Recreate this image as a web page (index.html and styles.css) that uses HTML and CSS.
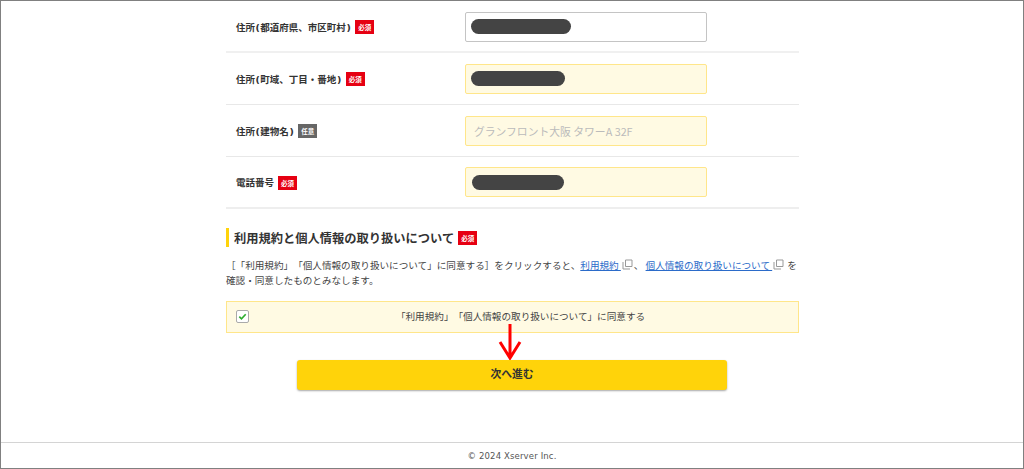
FILE: index.html
```html
<!DOCTYPE html>
<html lang="ja">
<head>
<meta charset="utf-8">
<title>Xserver</title>
<link rel="stylesheet" href="styles.css">
</head>
<body>
<div class="frame">
  <main class="content">
    <div class="row row-first">
      <div class="label"><span>住所<span class="paren">(</span>都道府県、市区町村<span class="paren">)</span></span><span class="tag">必須</span></div>
      <div class="field field-plain"><span class="mask mask-a"></span></div>
    </div>
    <div class="row">
      <div class="label"><span>住所<span class="paren">(</span>町域、丁目・番地<span class="paren">)</span></span><span class="tag">必須</span></div>
      <div class="field"><span class="mask mask-b"></span></div>
    </div>
    <div class="row">
      <div class="label"><span>住所<span class="paren">(</span>建物名<span class="paren">)</span></span><span class="tag tag-opt">任意</span></div>
      <div class="field placeholder">グランフロント大阪 タワーA 32F</div>
    </div>
    <div class="row row-last">
      <div class="label"><span>電話番号</span><span class="tag">必須</span></div>
      <div class="field"><span class="mask mask-c"></span></div>
    </div>

    <h2 class="title"><span>利用規約と個人情報の取り扱いについて</span><span class="tag">必須</span></h2>
    <p class="note">［「利用規約」「個人情報の取り扱いについて」に同意する］をクリックすると、<a href="#">利用規約 </a><svg class="ext" viewBox="0 0 11 11"><path d="M3.5 1h6.5v6.5h-6.5z" fill="#fff" stroke="#999"/><path d="M1 3v7h7" fill="none" stroke="#999"/></svg>、 <a href="#">個人情報の取り扱いについて </a><svg class="ext" viewBox="0 0 11 11"><path d="M3.5 1h6.5v6.5h-6.5z" fill="#fff" stroke="#999"/><path d="M1 3v7h7" fill="none" stroke="#999"/></svg> を確認・同意したものとみなします。</p>

    <div class="agree">
      <span class="check"><svg viewBox="0 0 12 12"><path d="M2.5 6.2l2.4 2.4 4.6-5" fill="none" stroke="#2fae2f" stroke-width="1.8"/></svg></span>
      <span class="agree-text">「利用規約」「個人情報の取り扱いについて」に同意する</span>
    </div>

    <div class="actions">
      <button class="next" type="button">次へ進む</button>
      <svg class="arrow" viewBox="0 0 24 36"><path d="M12 0v34M2 18l10 16 10-16" fill="none" stroke="#f00" stroke-width="3"/></svg>
    </div>
  </main>
  <footer class="footer">© 2024 Xserver Inc.</footer>
</div>
</body>
</html>
```

FILE: styles.css
```css
* { box-sizing: border-box; }
html, body { margin: 0; padding: 0; }
body {
  width: 1024px;
  height: 469px;
  overflow: hidden;
  background: #fff;
  color: #333;
  font-family: "Noto Sans CJK JP", "Noto Sans", sans-serif;
  text-spacing-trim: space-all;
}
.frame {
  width: 1024px;
  height: 469px;
  border: 1px solid #808080;
  display: flex;
  flex-direction: column;
}
.content {
  width: 573px;
  margin-left: 225px;
  flex: 1;
}
.row {
  height: 52px;
  display: flex;
  align-items: center;
  justify-content: space-between;
  padding-left: 10px;
  padding-right: 92px;
  border-bottom: 1px solid #e8e8e8;
}
.row-first { padding-top: 1px; border-bottom: 2px solid #f0f0f0; }
.row-last { border-bottom: 2px solid #eee; }
.label {
  display: flex;
  align-items: center;
  gap: 4px;
  font-family: "DejaVu Sans", "Noto Sans CJK JP", sans-serif;
  font-size: 9.5px;
  font-weight: 700;
}
.paren { margin: 0 .5px; }
.tag {
  display: inline-block;
  width: 19px;
  height: 14px;
  margin-top: 1px;
  line-height: 14px;
  text-align: center;
  font-family: "Noto Sans CJK JP", sans-serif;
  font-size: 6.5px;
  font-weight: 700;
  color: #fff;
  background: #e60012;
}
.tag-opt { background: #666; }
.field {
  width: 242px;
  height: 30px;
  display: flex;
  align-items: center;
  padding-left: 8px;
  background: #fffae3;
  border: 1px solid #ffe68a;
  border-radius: 2px;
}
.field-plain { background: #fff; border-color: #c4c4c4; padding-left: 5px; }
.placeholder { color: #bbb; font-size: 10.8px; }
.mask { display: block; height: 15px; border-radius: 8px; background: #444; }
.mask-a { width: 100px; }
.mask-b { width: 94px; margin-left: -3px; }
.mask-c { width: 92px; margin-left: -2px; }
.title {
  margin: 19px 0 0;
  height: 19px;
  display: flex;
  align-items: center;
  gap: 4px;
  padding-left: 5px;
  border-left: 3px solid #ffd30a;
  font-size: 12.25px;
  font-weight: 700;
}
.note {
  margin: 11px 0 0;
  font-size: 9.6px;
  line-height: 14.5px;
  color: #444;
}
.note a { color: #2b6bc9; }
.ext { width: 11px; height: 11px; margin: 0 1px; vertical-align: -1px; }
.agree {
  margin-top: 14px;
  height: 32px;
  display: flex;
  align-items: center;
  padding-left: 9px;
  padding-bottom: 2px;
  background: #fffae3;
  border: 1px solid #ffe68a;
  font-size: 9.6px;
  color: #444;
}
.check {
  width: 13px;
  height: 13px;
  display: block;
  background: #fff;
  border: 1px solid #aaa;
  border-radius: 2px;
}
.check svg { display: block; width: 11px; height: 11px; }
.agree-text { flex: 1; margin-left: -6px; text-align: center; }
.actions {
  margin-top: 27px;
  position: relative;
  display: flex;
  justify-content: center;
}
.next {
  width: 430px;
  height: 30px;
  margin-left: -1px;
  padding: 0 0 5px;
  border: 0;
  border-radius: 3px;
  background: #ffd30a;
  color: #333;
  font-family: inherit;
  font-size: 10.8px;
  font-weight: 700;
  box-shadow: 0 1px 2px rgba(0,0,0,.35);
}
.arrow {
  position: absolute;
  left: 272px;
  top: -36px;
  width: 24px;
  height: 36px;
}
.footer {
  height: 26px;
  flex: none;
  border-top: 1px solid #d4d4d4;
  text-align: center;
  line-height: 26px;
  font-family: "DejaVu Sans", sans-serif;
  font-size: 8.5px;
  letter-spacing: .15px;
  color: #555;
}
```
